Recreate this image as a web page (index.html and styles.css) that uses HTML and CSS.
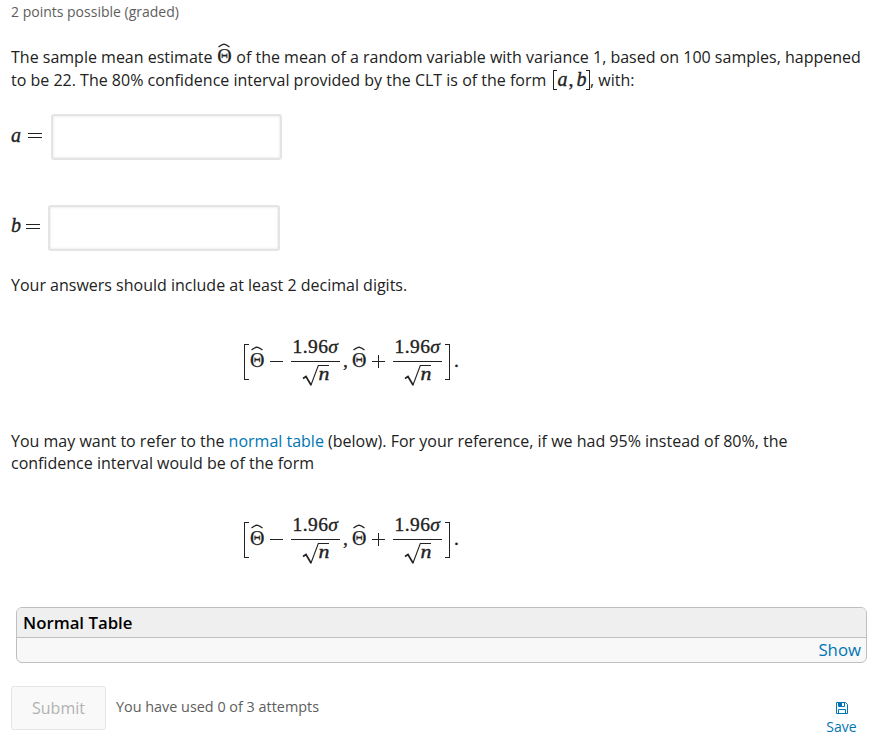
FILE: index.html
```html
<!DOCTYPE html>
<html lang="en">
<head>
<meta charset="utf-8">
<title>Problem</title>
<link rel="stylesheet" href="styles.css">
</head>
<body>
<svg class="defs" width="0" height="0">
  <symbol id="hat" viewBox="0 0 14 5"><path d="M1.5 4 Q4.5 1.5 7 1.1 Q9.5 1.5 12.5 4" fill="none" stroke="currentColor" stroke-width="1.2"/></symbol>
  <symbol id="root" viewBox="0 0 28 23"><path d="M1 14.5 L4 12.5 L9 21" fill="none" stroke="currentColor" stroke-width="1.7"/><path d="M8.8 21.5 L16.3 1.5 H27" fill="none" stroke="currentColor" stroke-width="1.1"/></symbol>
</svg>
<main class="problem">
  <p class="points">2 points possible (graded)</p>
  <p class="statement">The sample mean estimate <span class="theta"><svg class="hat"><use href="#hat"/></svg>Θ</span> of the mean of a random variable with variance 1, based on 100 samples, happened<br>to be 22. The 80% confidence interval provided by the CLT is of the form <span class="interval"><span class="bracket left"></span><i>a</i><span class="sep">,</span><i>b</i><span class="bracket right"></span></span>, with:</p>
  <div class="answer"><label for="a"><i>a</i><span class="equals"></span></label><input id="a" type="text"></div>
  <div class="answer second"><label for="b"><i>b</i><span class="equals"></span></label><input id="b" type="text"></div>
  <p class="digits">Your answers should include at least 2 decimal digits.</p>
  <div class="formula">
    <span class="fence open"></span>
    <span class="theta"><svg class="hat"><use href="#hat"/></svg>Θ</span>
    <span class="op"></span>
    <span class="frac"><span class="num">1.96<i>σ</i></span><span class="den"><svg class="root"><use href="#root"/></svg><i>n</i></span></span>
    <span class="comma">,</span>
    <span class="theta"><svg class="hat"><use href="#hat"/></svg>Θ</span>
    <span class="op plus"></span>
    <span class="frac"><span class="num">1.96<i>σ</i></span><span class="den"><svg class="root"><use href="#root"/></svg><i>n</i></span></span>
    <span class="fence close"></span>
    <span class="dot">.</span>
  </div>
  <p class="hint">You may want to refer to the <a href="#table">normal table</a> (below). For your reference, if we had 95% instead of 80%, the<br>confidence interval would be of the form</p>
  <div class="formula lower">
    <span class="fence open"></span>
    <span class="theta"><svg class="hat"><use href="#hat"/></svg>Θ</span>
    <span class="op"></span>
    <span class="frac"><span class="num">1.96<i>σ</i></span><span class="den"><svg class="root"><use href="#root"/></svg><i>n</i></span></span>
    <span class="comma">,</span>
    <span class="theta"><svg class="hat"><use href="#hat"/></svg>Θ</span>
    <span class="op plus"></span>
    <span class="frac"><span class="num">1.96<i>σ</i></span><span class="den"><svg class="root"><use href="#root"/></svg><i>n</i></span></span>
    <span class="fence close"></span>
    <span class="dot">.</span>
  </div>
  <section class="panel" id="table">
    <h2>Normal Table</h2>
    <div class="toggle"><a href="#table">Show</a></div>
  </section>
  <footer class="actions">
    <button class="submit" disabled>Submit</button>
    <span class="attempts">You have used 0 of 3 attempts</span>
    <a class="save" href="#save">
      <svg width="12" height="12" viewBox="0 0 12 12" fill="none" stroke="currentColor"><path d="M.5 .5H9.5L11.5 2.5V11.5H.5Z M2.5 11.5V7.5H9.5V11.5"/><path d="M2.5 .5V4.5H8.5V.5"/><path d="M3 1H6V4H3Z" fill="currentColor" stroke="none"/></svg>
      <span>Save</span>
    </a>
  </footer>
</main>
</body>
</html>
```
FILE: styles.css
```css
* { box-sizing: border-box; }
body { margin: 0; background: #fff; color: #222; font: 16px/22px "Open Sans", sans-serif; }
p, h2 { margin: 0; }
a { color: #0075b4; text-decoration: none; }
.defs { display: block; width: 0; height: 0; }
.problem { width: 882px; height: 740px; padding: 1px 15px 0 11px; overflow: hidden; white-space: nowrap; }
.points { color: #5e5e5e; font-size: 14px; }
.statement { margin-top: 23px; line-height: 22.5px; }

.theta { position: relative; display: inline-block; width: 15px; color: #222; font: 20px/20px "Liberation Serif", serif; text-align: center; -webkit-text-stroke: .25px currentColor; }
.statement .theta { width: 15.5px; height: 20px; margin: -4px 0 0; }
.hat { position: absolute; left: .5px; top: -3px; width: 14px; height: 5px; }
.interval { display: inline-flex; height: 20px; margin: -2px 0; align-items: center; vertical-align: -4px; font: 20px/20px "Liberation Serif", serif; -webkit-text-stroke: .35px currentColor; }
.interval i { margin-top: -2px; }
.sep { width: 9px; padding-left: 1px; margin-top: -2px; }
.bracket { width: 4px; height: 20px; border: solid #222; }
.bracket.left { border-width: 1px 0 1px 1px; margin: 0 0 0 3px; }
.bracket.right { border-width: 1px 1px 1px 0; margin-left: -.5px; }

.answer { display: flex; height: 46px; margin-top: 23px; }
.answer.second { margin-top: 45px; }
.answer label { display: flex; width: 40px; font: 20px/20px "Liberation Serif", serif; padding-top: 11px; -webkit-text-stroke: .35px currentColor; }
.answer.second label { width: 37px; padding-top: 10px; }
.answer i { width: 10px; }
.equals { width: 14px; height: 5px; margin: 8px 0 0 7px; border: solid #222; border-width: 1px 0; }
.second .equals { margin: 9px 0 0 5px; }
.answer input { width: 231px; height: 46px; padding: 0 10px; border: 2px solid #e4e4e4; border-radius: 3px; background: #fff; box-shadow: inset 0 0 3px #e0e0e0; font: 16px "Open Sans", sans-serif; }
.second input { width: 232px; }
.digits { margin-top: 23px; }

.formula { display: flex; align-items: flex-start; height: 44px; margin: 47px 0 0 233px; font: 19.5px/20px "Liberation Serif", serif; -webkit-text-stroke: .35px currentColor; }
.fence { width: 5px; height: 36px; margin-top: 1px; border: solid #222; }
.fence.open { border-width: 1px 0 1px 1px; }
.fence.close { margin-left: 3px; border-width: 1px 1px 1px 0; }
.formula .theta { margin-top: 7px; padding-left: 1px; }
.formula .hat { top: -4px; left: 1px; }
.op { position: relative; width: 13px; height: 1px; margin: 18px 8px 0 6px; background: #222; }
.op.plus::after { content: ""; position: absolute; left: 6px; top: -6px; width: 1px; height: 13px; background: #222; }
.frac { display: flex; flex-direction: column; width: 49px; text-align: center; }
.num { height: 19px; line-height: 7px; border-bottom: 1px solid #222; letter-spacing: .4px; }
.den { display: flex; height: 24px; padding: 2px 0 0 11px; }
.den i { margin-left: -11px; line-height: 19px; transform: scaleX(1.12); }
.root { width: 28px; height: 23px; }
.comma { width: 11px; padding-left: 3px; margin-top: 8px; }
.dot { margin: 8px 0 0 4px; }
.hint { margin-top: 43px; }
.lower { margin-top: 47px; }

.panel { width: 851px; height: 56px; margin: 42px 0 0 5px; border: 1px solid #bfbfbf; border-radius: 6px; overflow: hidden; background: #f8f8f8; }
.panel h2 { height: 30px; padding-left: 6px; border-bottom: 1px solid #bfbfbf; background: #efefef; color: #000; font-size: 16.8px; font-weight: 600; line-height: 30px; }
.toggle { padding: 1px 5px; text-align: right; font-size: 16.8px; }
.actions { display: flex; height: 54px; margin-top: 23px; font-size: 14px; }
.submit { width: 95px; height: 44px; padding: 0; border: 1px solid #e5e5e5; border-radius: 3px; background: #f9f9f9; color: #b2b2b2; font: 16px "Open Sans", sans-serif; }
.attempts { margin-left: 10px; font-size: 14.4px; line-height: 41px; color: #5e5e5e; }
.save { display: flex; flex-direction: column; align-items: center; margin-left: auto; margin-right: 10px; padding-top: 16px; width: 31px; }
.save span { line-height: 25px; }
```
